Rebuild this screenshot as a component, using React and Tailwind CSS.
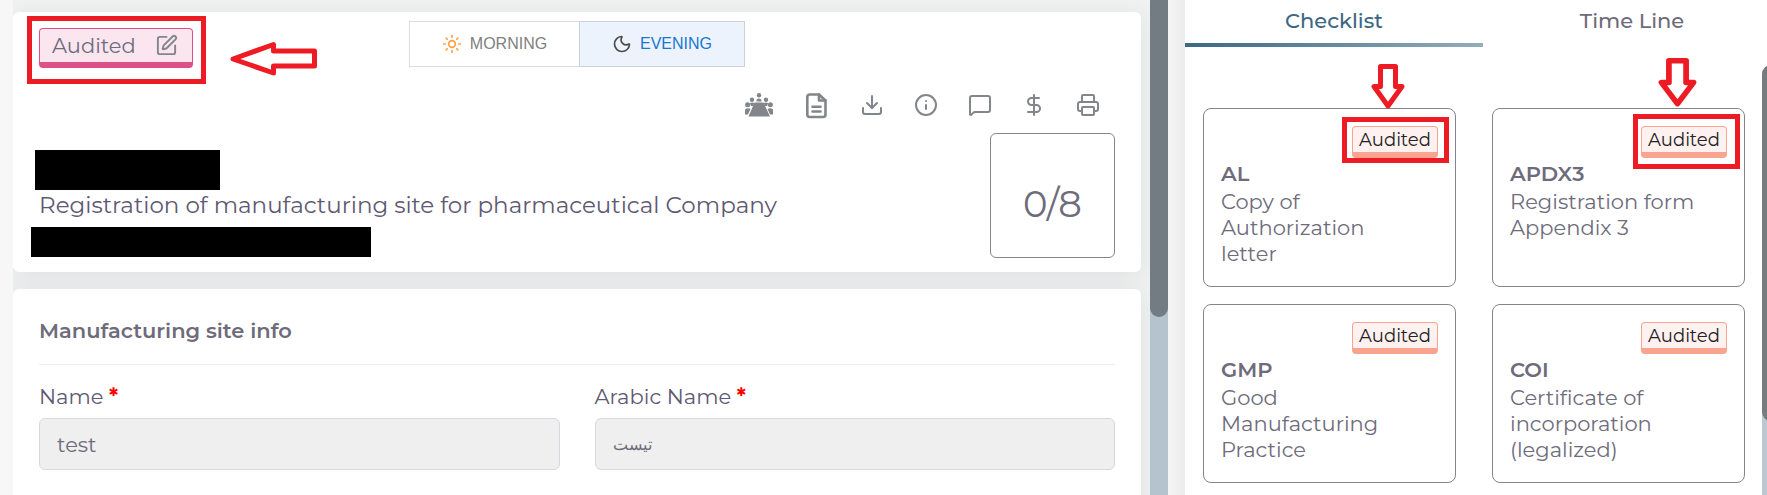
import { SquarePen, FileText, Download, Info, MessageSquare, DollarSign, Printer, Sun, Moon } from 'lucide-react';

const docs = [
  {
    code: 'AL',
    name: 'Copy of Authorization letter',
    box: 'absolute left-[138px] top-2 h-[46px] w-[107px] border-[5px] border-[#ed1c24]',
    arrow: 'absolute left-[167px] -top-[45px] h-[45px] w-[34px]',
  },
  {
    code: 'APDX3',
    name: 'Registration form Appendix 3',
    box: 'absolute left-[140px] top-[5px] h-[55px] w-[107px] border-[5px] border-[#ed1c24]',
    arrow: 'absolute left-[165px] -top-[51px] h-[49px] w-[39px]',
  },
  { code: 'GMP', name: 'Good Manufacturing Practice' },
  { code: 'COI', name: 'Certificate of incorporation (legalized)' },
];

function People() {
  return (
    <svg viewBox="0 0 28 24" className="h-6 w-7" fill="#82868b">
      <circle cx="14" cy="2.3" r="2.2" />
      <path d="M11.5 8.5V7.5Q11.8 5.6 14 5.6T16.5 7.5V8.5Z" />
      <circle cx="7" cy="6.8" r="2.2" />
      <circle cx="21" cy="6.8" r="2.2" />
      <path d="M4.8 10.2Q7 8.8 9.6 10.2L8 13H6Z" />
      <path d="M23.2 10.2Q21 8.8 18.4 10.2L20 13H22Z" />
      <circle cx="2.6" cy="11.8" r="2.5" />
      <circle cx="25.4" cy="11.8" r="2.5" />
      <path d="M0 16.5Q2.5 14.5 5.5 16L3 21.5H0Z" />
      <path d="M28 16.5Q25.5 14.5 22.5 16L25 21.5H28Z" />
      <path d="M9.5 9.5H18.5L25 23.5H3.5Z" />
    </svg>
  );
}

function DocumentIcon() {
  return (
    <svg viewBox="0 0 27 27" className="size-[27px]" fill="none" stroke="#82868b" strokeWidth="2.6" strokeLinecap="round" strokeLinejoin="round">
      <path d="M16 2.500H6.500A2.500 2.500 0 0 0 4.300 5V22.500A2.500 2.500 0 0 0 6.800 25H20A2.500 2.500 0 0 0 22.500 22.500V8.500Z" />
      <path d="M16 2.500V8.500H22.500" />
      <path d="M9.500 14.800H17.500M9.500 19.500H17.500" />
    </svg>
  );
}

const actions = [
  ['Meeting', People],
  ['Document', DocumentIcon],
  ['Download', Download],
  ['Info', Info],
  ['Comments', MessageSquare],
  ['Payment', DollarSign],
  ['Print', Printer],
];

function Field({ id, label, value, rtl }) {
  return (
    <div className="flex min-w-0 flex-1 flex-col">
      <label htmlFor={id} className="mb-1.5 text-[21px] leading-[30px] text-[#5e5873]">
        {label} <span className="font-bold text-[#ff0000]">*</span>
      </label>
      <input
        id={id}
        defaultValue={value}
        disabled
        className={
          rtl
            ? "h-[52px] w-full rounded-md border border-[#d8d6de] bg-[#efefef] px-[17px] font-['Liberation_Sans',sans-serif] text-[16px] text-[#6e6b7b]"
            : 'h-[52px] w-full rounded-md border border-[#d8d6de] bg-[#efefef] px-[17px] text-[21px] text-[#6e6b7b]'
        }
      />
    </div>
  );
}

function DownArrow({ className }) {
  return (
    <svg viewBox="0 0 34 45" className={className} preserveAspectRatio="none" fill="none" stroke="#ed1c24" strokeWidth="5" strokeLinejoin="round">
      <path d="M9.5 2.5H24.5V22.5H31L17 42L3 22.5H9.5Z" />
    </svg>
  );
}

export default function App() {
  return (
    <div className="flex h-screen overflow-hidden bg-[#f7f7f7] pl-[13px] font-['Montserrat','Inter',sans-serif] text-[#6e6b7b]">
      <main className="min-w-0 flex-1 overflow-hidden bg-[#f0f1f1] pt-3 pr-[9px]">
        <section className="relative h-[260px] rounded-md bg-white px-[26px] shadow-[0_4px_24px_0_rgba(34,41,47,0.08)]">
          <div className="flex items-start pt-[9px]">
            <div className="mt-[7px] flex h-10 w-[154px] items-center justify-between rounded border border-b-[6px] border-[#e05088] bg-[#fbe6f0] pr-3.5 pl-3 text-[21px]">
              <span>Audited</span>
              <button aria-label="Edit status"><SquarePen size={23} color="#82868b" /></button>
            </div>
            <div className="ml-[216px] flex h-[46px] font-['Liberation_Sans',sans-serif] text-[16px]">
              <button className="flex w-[170px] items-center justify-center gap-2 border border-r-0 border-[#dcdcdf] text-[#808080]">
                <Sun size={20} color="#ff9f43" />MORNING
              </button>
              <button className="flex w-[166px] items-center justify-center gap-2 border border-[#cbd3df] bg-[#edf3fc] text-[#1976d2]">
                <Moon size={20} color="#4b4b4b" />EVENING
              </button>
            </div>
          </div>
          <div className="mt-[25px] flex h-6 items-center justify-end gap-[30px] pr-[15px]">
            {actions.map(([label, Icon]) => (
              <button key={label} aria-label={label}><Icon color="#82868b" /></button>
            ))}
          </div>
          <div className="mt-4 flex items-start justify-between">
            <div className="mt-[17px]">
              <div className="-ml-1 h-10 w-[185px] bg-black" />
              <h1 className="pb-[7px] text-[23px] leading-[30px] text-[#5e5873]">
                Registration of manufacturing site for pharmaceutical Company
              </h1>
              <div className="-ml-2 h-[30px] w-[340px] bg-black" />
            </div>
            <div className="flex size-[125px] items-center justify-center rounded-md border border-[#82868b] pt-4 text-[37px] leading-[36px]">0/8</div>
          </div>
          <div className="absolute top-1 left-3.5 h-[68px] w-[179px] border-[5px] border-[#ed1c24]" />
          <svg viewBox="0 0 88 36" className="absolute top-[29px] left-[217px] h-9 w-[88px]" fill="none" stroke="#ed1c24" strokeWidth="5" strokeLinejoin="round">
            <path d="M3 18L43.5 3.5V10H84.5V25H43.5V32Z" />
          </svg>
        </section>

        <section className="mt-[17px] h-80 rounded-md bg-white px-[26px] pt-[25px] shadow-[0_4px_24px_0_rgba(34,41,47,0.08)]">
          <h2 className="border-b border-[#ebe9f1] pb-[17px] text-[21px] leading-[33px] font-semibold">Manufacturing site info</h2>
          <div className="mt-[17px] flex gap-[35px]">
            <Field id="name" label="Name" value="test" />
            <Field id="arabic" label="Arabic Name" value="تيست" rtl />
          </div>
        </section>
      </main>

      <div className="w-[18px] shrink-0 bg-[#b4c3cd]">
        <div className="h-[317px] rounded-b-full bg-[#747c83]" />
      </div>
      <div className="w-[17px] shrink-0 bg-linear-to-r from-[#f5f5f5] to-[#ebeceb]" />

      <aside className="flex w-[582px] shrink-0 bg-white">
        <div className="min-w-0 flex-1">
          <div className="grid w-[596px] grid-cols-2 text-[21px] font-medium">
            <button className="h-[47px] border-b-4 pb-0.5 text-[#3c6783] [border-image:linear-gradient(to_right,#3c6783,#93adba)_1]">Checklist</button>
            <button className="h-[47px] pb-1.5">Time Line</button>
          </div>
          <div className="mt-[61px] ml-[18px] grid w-[542px] grid-cols-2 gap-x-9 gap-y-[17px]">
            {docs.map((d) => (
              <article key={d.code} className="relative h-[179px] rounded-lg border border-[#82868b] px-[17px] pt-[17px] text-[21px]">
                <div className="ml-auto h-8 w-[86px] rounded border border-b-[6px] border-[#f8a48f] bg-[#fff1f0] text-center text-[18px] leading-[26px] text-[#222222]">Audited</div>
                <h3 className="leading-[31px] font-semibold">{d.code}</h3>
                <p className="mr-6 leading-[26px]">{d.name}</p>
                {d.box && <div className={d.box} />}
                {d.arrow && <DownArrow className={d.arrow} />}
              </article>
            ))}
          </div>
        </div>
        <div className="w-[5px] shrink-0 overflow-hidden pt-[65px]">
          <div className="h-full w-[18px] rounded-t-full bg-[#b9c8d1]">
            <div className="h-[356px] rounded-full bg-[#747c80]" />
          </div>
        </div>
      </aside>
    </div>
  );
}
